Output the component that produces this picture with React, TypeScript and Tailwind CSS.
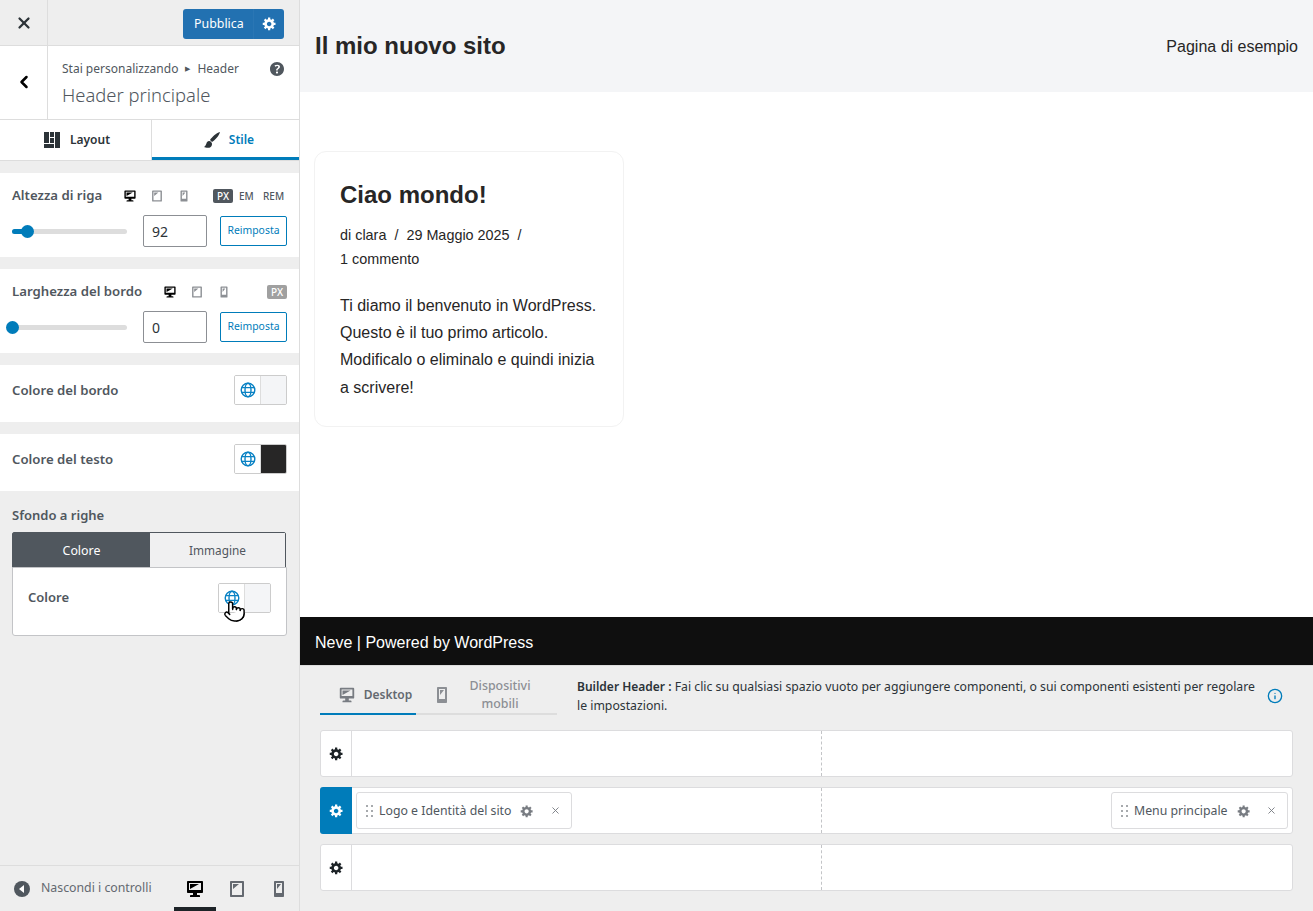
import React from 'react';
import { Info, X, ChevronLeft, Pointer } from 'lucide-react';

const GEAR = 'M18 12h-2.18c-.17.7-.44 1.35-.81 1.93l1.54 1.54-2.1 2.1-1.54-1.54c-.58.36-1.23.63-1.91.79V19H8v-2.18c-.68-.16-1.33-.43-1.91-.79l-1.54 1.54-2.12-2.12 1.54-1.54c-.36-.58-.63-1.23-.79-1.91H1V9.03h2.17c.16-.7.44-1.35.8-1.94L2.43 5.55l2.1-2.1 1.54 1.54c.58-.37 1.24-.64 1.93-.81V2h3v2.18c.68.16 1.33.43 1.91.79l1.54-1.54 2.12 2.12-1.54 1.54c.36.59.64 1.24.8 1.94H18V12zm-8.5 1.5c1.66 0 3-1.34 3-3s-1.34-3-3-3-3 1.34-3 3 1.34 3 3 3z';
const DESKTOP = 'M3 2h14c.55 0 1 .45 1 1v10c0 .55-.45 1-1 1h-5v2h2c.55 0 1 .45 1 1v1H5v-1c0-.55.45-1 1-1h2v-2H3c-.55 0-1-.45-1-1V3c0-.55.45-1 1-1zm13 9V4H4v7h12zM5 5h9L5 10V5z';
const TABLET = 'M4 2h12c.55 0 1 .45 1 1v14c0 .55-.45 1-1 1H4c-.55 0-1-.45-1-1V3c0-.55.45-1 1-1zm11 14V4H5v12h10zM6 5h6l-6 5V5z';
const PHONE = 'M6 2h8c.55 0 1 .45 1 1v14c0 .55-.45 1-1 1H6c-.55 0-1-.45-1-1V3c0-.55.45-1 1-1zm7 12V4H7v10h6zM8 5h4l-4 5V5z';
const HELP = 'M17 10c0-3.87-3.14-7-7-7-3.87 0-7 3.13-7 7 0 3.86 3.13 7 7 7 3.86 0 7-3.14 7-7zm-6.3 1.48H9.14v-.43c0-.38.08-.7.24-.98s.46-.57.88-.89c.41-.29.68-.53.81-.71.14-.18.2-.39.2-.62 0-.25-.09-.44-.28-.58-.19-.13-.45-.19-.79-.19-.58 0-1.25.19-2 .57l-.64-1.28c.87-.49 1.8-.74 2.77-.74.81 0 1.45.2 1.92.58.48.39.71.91.71 1.55 0 .43-.09.8-.29 1.11-.19.32-.57.67-1.11 1.06-.38.28-.61.49-.71.63-.1.15-.15.34-.15.57v.35zm-1.47 2.74c-.18-.18-.28-.43-.28-.75 0-.33.09-.58.27-.76s.44-.27.78-.27c.33 0 .59.09.77.27.18.19.27.44.27.76 0 .31-.09.56-.27.75-.18.18-.44.28-.77.28-.34 0-.6-.09-.77-.28z';

const Dash = ({ d, className }: { d: string; className: string }) => (
    <svg viewBox="0 0 20 20" fill="currentColor" fillRule="evenodd" className={className}>
        <path d={d} />
    </svg>
);

// Globe with two latitude lines, as the global colour toggle draws it
const GlobeIcon = () => (
    <svg viewBox="0 0 16 16" fill="none" stroke="#0a82c4" strokeWidth="1.4" className="w-4 h-4">
        <circle cx="8" cy="8" r="6.8" />
        <ellipse cx="8" cy="8" rx="3" ry="6.8" />
        <path d="M1.8 5.6h12.4M1.8 10.4h12.4" />
    </svg>
);

// Desktop / tablet / phone switcher next to a control label
const DeviceIcons = () => (
    <div className="flex items-center gap-[13px]">
        <Dash d={DESKTOP} className="w-[14px] h-[14px] text-black" />
        <Dash d={TABLET} className="w-[14px] h-[14px] text-[#8c8f94]" />
        <Dash d={PHONE} className="w-[14px] h-[14px] text-[#8c8f94]" />
    </div>
);

const RangeRow = ({ value, fill }: { value: string; fill: number }) => (
    <div className="flex items-center">
        <div className="relative w-[115px] h-[5px] rounded bg-[#dddddd] ml-3">
            <div className="h-full rounded bg-[#007cba]" style={{ width: fill }} />
            <div className="absolute top-[-4px] w-[13px] h-[13px] rounded-full bg-[#007cba]" style={{ left: fill - 6 }} />
        </div>
        <div className="ml-4 w-16 h-8 border border-[#8c8f94] rounded-[2px] flex items-center pl-2 text-[14px] text-[#2c3338]">{value}</div>
        <div className="ml-[13px] w-[67px] h-[30px] border border-[#007cba] rounded-[2px] flex items-center justify-center text-[10.4px] text-[#007cba]">Reimposta</div>
    </div>
);

const ColorRow = ({ label, swatch }: { label: string; swatch: string }) => (
    <div className="h-[57px] bg-white flex justify-between pl-3 pr-3 pt-[10px]">
        <span className="text-[13.2px] font-semibold text-[#50575e] leading-[30px]">{label}</span>
        <ColorControl swatch={swatch} />
    </div>
);

const ColorControl = ({ swatch }: { swatch: string }) => (
    <div className="flex w-[53px] h-[30px] border border-[#cccccc] rounded-[2px] overflow-hidden">
        <div className="w-[26px] flex items-center justify-center bg-white border-r border-[#dddddd]">
            <GlobeIcon />
        </div>
        <div className={`flex-1 ${swatch}`} />
    </div>
);

const BuilderChip = ({ label, width }: { label: string; width: string }) => (
    <div className={`${width} h-[37px] bg-white border border-[#dcdcde] rounded-[3px] flex items-center pl-[9px] pr-[10px] text-[12.3px] text-[#50575e]`}>
        <span className="grid grid-cols-2 gap-x-[3px] gap-y-[3px] mr-[6px]">
            {[0, 1, 2, 3, 4, 5].map((i) => (
                <span key={i} className="w-[2px] h-[2px] bg-[#a7aaad]" />
            ))}
        </span>
        <span className="whitespace-nowrap pt-[1px]">{label}</span>
        <Dash d={GEAR} className="w-[14px] h-[14px] ml-[9px] text-[#787c82]" />
        <X size={11} className="ml-auto text-[#787c82]" />
    </div>
);

const BuilderRow = ({ active, children }: { active?: boolean; children?: React.ReactNode }) => (
    <div className="h-[47px] bg-white border border-[#dcdcde] rounded-[3px] flex">
        <div className={`w-[32px] -my-px -ml-px rounded-l-[3px] flex items-center justify-center ${active ? 'bg-[#007cba] text-white' : 'border-r border-[#dcdcde] text-[#1d2327] pl-[1px]'}`}>
            <Dash d={GEAR} className="w-[15px] h-[15px]" />
        </div>
        <div className="flex-1 grid grid-cols-2">
            <div className="border-r border-dashed border-[#c3c4c7] flex items-center pl-1">{children && (children as React.ReactNode[])[0]}</div>
            <div className="flex items-center justify-end pr-1">{children && (children as React.ReactNode[])[1]}</div>
        </div>
    </div>
);

const App: React.FC = () => {
    return (
        <div className="flex w-[1313px] h-[911px] overflow-hidden bg-white">
            {/* Customizer sidebar */}
            <aside className="w-[300px] h-full flex flex-col bg-[#eeeeee] border-r border-[#dddddd] text-[#50575e] [font-family:'Noto_Sans',sans-serif]">
                <div className="h-[46px] flex border-b border-[#dddddd]">
                    <div className="w-12 border-r border-[#dddddd] flex items-center justify-center text-[#2c3338]">
                        <X size={18} strokeWidth={3} />
                    </div>
                    <div className="flex-1 flex justify-end pt-[9px] pr-[15px]">
                        <div className="w-[101px] h-[30px] rounded-[3px] bg-[#2271b1] text-white flex text-[12.4px] leading-[30px]">
                            <span className="w-[70px] pl-[11px]">Pubblica</span>
                            <span className="flex-1 flex items-center justify-center border-l border-[#2a76b4] pb-[1px]">
                                <Dash d={GEAR} className="w-[15px] h-[15px]" />
                            </span>
                        </div>
                    </div>
                </div>

                <div className="h-[74px] flex bg-white border-b border-[#dddddd]">
                    <div className="w-12 border-r border-[#dddddd] flex items-center justify-center text-black pb-[2px]">
                        <ChevronLeft size={20} strokeWidth={3} />
                    </div>
                    <div className="flex-1 pl-[14px] pr-[12px] pt-[13px] relative">
                        <div className="flex items-center text-[12px] leading-[18px]">
                            <span>Stai personalizzando</span>
                            <span className="mx-[7px] text-[7px]">▶</span>
                            <span>Header</span>
                            <Dash d={HELP} className="w-5 h-5 ml-auto text-[#50575e]" />
                        </div>
                        <div className="text-[18.4px] font-light leading-[26px] mt-[3px]">Header principale</div>
                    </div>
                </div>

                <div className="h-[41px] flex bg-white border-b border-[#dddddd] text-[12px] font-semibold">
                    <div className="w-[152px] border-r border-[#dddddd] flex items-center justify-center gap-[10px] text-[#2c3338] pl-[3px]">
                        <svg viewBox="0 0 16 16" fill="currentColor" className="w-4 h-4">
                            <path d="M0 0h5v11H0zM6 0h4v5H6zM6 6h4v5H6zM11 0h5v16h-5zM0 12h10v4H0z" />
                        </svg>
                        Layout
                    </div>
                    <div className="flex-1 flex items-center justify-center gap-2 text-[#007cba] border-b-[3px] border-[#007cba] pt-[2px] pl-[6px]">
                        <svg viewBox="0 0 18 18" fill="#2c3338" className="w-[18px] h-[18px]">
                            <path d="M17 1C13 2 9 6 7 9l2 2c3-2 7-6 8-10zM6 10c-3 0-2 4-5 6 2 1 8 2 8-3 0-1-1-3-3-3z" />
                        </svg>
                        Stile
                    </div>
                </div>

                <div className="mt-3 h-[84px] bg-white pt-[13px]">
                    <div className="flex items-center h-5 pl-3 pr-[15px] mb-[9px]">
                        <span className="w-[111px] text-[13.2px] font-semibold">Altezza di riga</span>
                        <DeviceIcons />
                        <div className="ml-auto flex items-center text-[10px] font-medium">
                            <span className="w-5 h-[14px] leading-[14px] text-center bg-[#50575e] text-white rounded-[2px]">PX</span>
                            <span className="ml-[6px] w-[14px] text-center">EM</span>
                            <span className="ml-[10px] w-[21px] text-center">REM</span>
                        </div>
                    </div>
                    <RangeRow value="92" fill={15} />
                </div>

                <div className="mt-3 h-[84px] bg-white pt-[13px]">
                    <div className="flex items-center h-5 px-3 mb-[9px]">
                        <span className="w-[151px] text-[13.2px] font-semibold">Larghezza del bordo</span>
                        <DeviceIcons />
                        <span className="ml-auto w-5 h-[14px] leading-[14px] text-center bg-[#a0a0a0] text-white rounded-[2px] text-[10px] font-medium">PX</span>
                    </div>
                    <RangeRow value="0" fill={0} />
                </div>

                <div className="mt-3"><ColorRow label="Colore del bordo" swatch="bg-[#f4f5f7]" /></div>
                <div className="mt-3"><ColorRow label="Colore del testo" swatch="bg-[#272626]" /></div>

                <div className="px-3 pt-[15px]">
                    <div className="text-[13px] font-semibold leading-[18px] mb-2">Sfondo a righe</div>
                    <div className="w-[274px] h-[36px] flex border border-[#50575e] rounded-t-[2px] text-[12.4px] leading-[35px] text-center">
                        <div className="w-[137px] bg-[#50575e] text-white">Colore</div>
                        <div className="flex-1 bg-[#f0f0f1] text-[11.8px]">Immagine</div>
                    </div>
                    <div className="w-[275px] h-[69px] -mt-px bg-white border border-[#c3c4c7] rounded-b-[3px] flex justify-between pl-[15px] pr-[15px] pt-[15px]">
                        <span className="text-[13px] font-semibold leading-[28px]">Colore</span>
                        <div className="relative">
                            <ColorControl swatch="bg-[#f4f5f7]" />
                            <Pointer size={23} strokeWidth={1.5} fill="white" className="absolute left-[5px] top-[17px] text-black" />
                        </div>
                    </div>
                </div>

                <div className="mt-auto h-[46px] flex items-stretch border-t border-[#dddddd]">
                    <div className="flex items-center pl-[14px] text-[#646970]">
                        <svg viewBox="0 0 16 16" className="w-4 h-4 mr-[11px]">
                            <circle cx="8" cy="8" r="8" fill="#50575e" />
                            <path d="M10 4v8L5 8z" fill="white" />
                        </svg>
                        <span className="text-[12.3px]">Nascondi i controlli</span>
                    </div>
                    <div className="ml-auto flex">
                        <div className="w-[42px] flex items-center justify-center border-b-4 border-[#1d2327] text-black pt-1">
                            <Dash d={DESKTOP} className="w-5 h-5" />
                        </div>
                        <div className="w-[42px] flex items-center justify-center text-[#646970]">
                            <Dash d={TABLET} className="w-5 h-5" />
                        </div>
                        <div className="w-[41px] flex items-center justify-center text-[#646970]">
                            <Dash d={PHONE} className="w-5 h-5" />
                        </div>
                    </div>
                </div>
            </aside>

            <main className="flex-1 h-full flex flex-col">
                {/* Site preview */}
                <div className="h-[617px] [font-family:'Liberation_Sans',sans-serif] text-[#272626]">
                    <div className="h-[92px] bg-[#f4f5f7] flex items-center justify-between px-[15px]">
                        <span className="text-[24px] font-bold">Il mio nuovo sito</span>
                        <span className="text-[16px] mt-[1px]">Pagina di esempio</span>
                    </div>
                    <div className="pt-[59px] pl-[14px]">
                        <div className="w-[310px] h-[276px] border border-[#f2f2f2] rounded-xl pt-[25px] pl-[25px] pr-[25px]">
                            <h1 className="text-[24px] font-bold leading-[36px]">Ciao mondo!</h1>
                            <p className="text-[14.4px] leading-[24px] mt-[10px]">
                                di clara&nbsp;&nbsp;/&nbsp;&nbsp;29 Maggio 2025&nbsp;&nbsp;/<br />1 commento
                            </p>
                            <p className="text-[16px] leading-[27.2px] mt-[21px]">
                                Ti diamo il benvenuto in WordPress. Questo è il tuo primo articolo. Modificalo o eliminalo e quindi inizia a scrivere!
                            </p>
                        </div>
                    </div>
                </div>
                <div className="h-[48px] bg-[#0f0f0f] text-white text-[16px] leading-[51px] pl-[15px] [font-family:'Liberation_Sans',sans-serif]">Neve | Powered by WordPress</div>

                {/* Header builder */}
                <div className="flex-1 bg-[#eeeeee] border-t border-[#dddddd] px-5 pt-[10px] [font-family:'Noto_Sans',sans-serif]">
                    <div className="flex h-[54px]">
                        <div className="w-[237px] h-[39px] flex text-[12px] font-semibold text-[#646970] border-b-2 border-[#dddddd]">
                            <div className="w-[96px] -mb-[2px] border-b-2 border-[#007cba] flex items-center justify-center gap-2 pl-[14px]">
                                <Dash d={DESKTOP} className="w-[18px] h-[18px] text-[#787c82]" />
                                Desktop
                            </div>
                            <div className="flex-1 flex items-center pl-[16px]">
                                <Dash d={PHONE} className="w-5 h-5 text-[#8c8f94]" />
                                <span className="font-medium text-[12.4px] text-[#8c8f94] text-center leading-[18px] w-[96px] pt-[1px]">Dispositivi mobili</span>
                            </div>
                        </div>
                        <div className="ml-5 w-[682px] text-[12.25px] leading-[19px] text-[#2c3338] pt-[1px]">
                            <b className="font-semibold text-[12px]">Builder Header :</b> Fai clic su qualsiasi spazio vuoto per aggiungere componenti, o sui componenti esistenti per regolare le impostazioni.
                        </div>
                        <Info size={16} className="ml-auto mr-[10px] mt-[12px] text-[#007cba]" />
                    </div>
                    <div className="flex flex-col gap-[10px]">
                        <BuilderRow />
                        <BuilderRow active>
                            <BuilderChip label="Logo e Identità del sito" width="w-[216px]" />
                            <BuilderChip label="Menu principale" width="w-[177px]" />
                        </BuilderRow>
                        <BuilderRow />
                    </div>
                </div>
            </main>
        </div>
    );
};

export default App;
